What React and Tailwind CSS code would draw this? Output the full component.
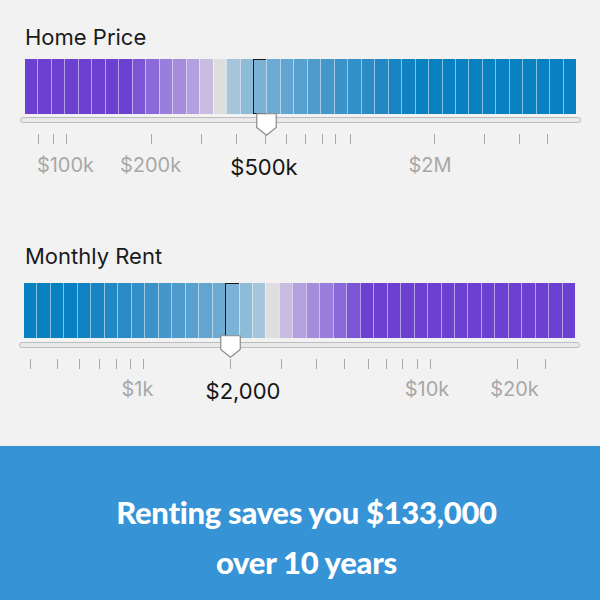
import React from "react";

const PURPLE = ["#c8bde1", "#b3a0de", "#a68ddc", "#9a7edb", "#8a69d8", "#7a55d4", "#6c41d1"];
const BLUE = ["#a5c6da", "#8ebbd7", "#7bb2d5", "#6eabd2", "#62a5d0", "#58a0ce", "#4f9bcc", "#4597ca", "#3c93c8", "#338fc7", "#2a8bc5", "#2188c4", "#1884c2", "#1082c1", "#0980c0"];
const GRAY = "#dedede";

function rampColor(ramp, d) {
  return ramp[Math.min(d, ramp.length) - 1];
}

function buildColors(grayIndex, leftRamp, rightRamp) {
  const out = [];
  for (let i = 0; i < 41; i++) {
    if (i < grayIndex) out.push(rampColor(leftRamp, grayIndex - i));
    else if (i === grayIndex) out.push(GRAY);
    else out.push(rampColor(rightRamp, i - grayIndex));
  }
  return out;
}

function Handle({ className }) {
  return (
    <svg className={`absolute ${className}`} width="21" height="23" viewBox="0 0 21 23">
      <path
        d="M0.75 0.75 H20.25 V14.5 L10.5 22.25 L0.75 14.5 Z"
        fill="#ffffff"
        stroke="#8a8a8a"
        strokeWidth="1.2"
      />
    </svg>
  );
}

function Bar({ colors, selected, className }) {
  return (
    <div className={`flex h-[55px] w-[551px] ${className}`}>
      {colors.map((c, i) => (
        <div
          key={i}
          className={`relative flex-1 ${i > 0 ? "border-l border-l-[#ffffff80]" : ""}`}
          style={{ backgroundColor: c }}
        >
          {i === selected && (
            <div className="absolute -left-px -right-px top-0 bottom-0 border-[1.5px] border-[#1a1a1a]" />
          )}
        </div>
      ))}
    </div>
  );
}

function Ticks({ ticks, className }) {
  return (
    <div className={`relative h-[10px] ${className}`}>
      {ticks.map((x, i) => (
        <div key={i} className="absolute top-0 w-px h-[10px] bg-[#a9a9a9]" style={{ left: x }} />
      ))}
    </div>
  );
}

function Labels({ labels, className }) {
  return (
    <div className={`relative h-[24px] ${className}`}>
      {labels.map((l, i) => (
        <div
          key={i}
          className={`absolute -translate-x-1/2 whitespace-nowrap leading-[24px] ${
            l.active ? "top-[2px] text-[22px] text-[#161616]" : "top-0 text-[20px] text-[#a8a8a8]"
          }`}
          style={{ left: l.x }}
        >
          {l.text}
        </div>
      ))}
    </div>
  );
}

const homeColors = buildColors(14, PURPLE, BLUE);
const rentColors = buildColors(18, BLUE, PURPLE);

export default function App() {
  return (
    <div className="w-[600px] h-[600px] bg-[#f2f2f2] flex flex-col font-['Inter',sans-serif]">
      {/* Home Price */}
      <section className="relative h-[219px] pt-[23px]">
        <h2 className="pl-[25px] h-[28px] text-[22px] leading-[28px] text-[#1b1b1b]">Home Price</h2>
        <Bar colors={homeColors} selected={17} className="ml-[25px] mt-[8px]" />
        <div className="ml-[20px] mt-[3px] h-[6px] w-[561px] rounded-full border border-[#bdbdbd] bg-[#e9e9e9]" />
        <Ticks
          className="mt-[11px]"
          ticks={[38, 53, 66, 151, 201, 236, 265, 286, 305, 322, 335, 350, 434, 484, 519, 547]}
        />
        <Labels
          className="mt-[9px]"
          labels={[
            { text: "$100k", x: 65.5 },
            { text: "$200k", x: 150.5 },
            { text: "$500k", x: 264, active: true },
            { text: "$2M", x: 430 },
          ]}
        />
        <Handle className="left-[256px] top-[113px]" />
      </section>

      {/* Monthly Rent */}
      <section className="relative h-[227px] pt-[23px]">
        <h2 className="pl-[25px] h-[28px] text-[22px] leading-[28px] text-[#1b1b1b]">Monthly Rent</h2>
        <Bar colors={rentColors} selected={15} className="ml-[24px] mt-[13px]" />
        <div className="ml-[19px] mt-[3.5px] h-[6px] w-[561px] rounded-full border border-[#bdbdbd] bg-[#e9e9e9]" />
        <Ticks
          className="mt-[11.5px]"
          ticks={[30, 57, 79, 99, 116, 130, 143, 230, 281, 316, 344, 368, 386, 402, 417, 430, 517, 545]}
        />
        <Labels
          className="mt-[8px]"
          labels={[
            { text: "$1k", x: 137.5 },
            { text: "$2,000", x: 243, active: true },
            { text: "$10k", x: 427 },
            { text: "$20k", x: 514.5 },
          ]}
        />
        <Handle className="left-[219.5px] top-[116px]" />
      </section>

      {/* Result */}
      <div className="flex-1 bg-[#3593d6] flex flex-col items-center pt-[41px] pl-[13px] text-white font-black font-['Lato',sans-serif] text-[31px] leading-[50px] tracking-[-0.3px]">
        <div>Renting saves you $133,000</div>
        <div>over 10 years</div>
      </div>
    </div>
  );
}
